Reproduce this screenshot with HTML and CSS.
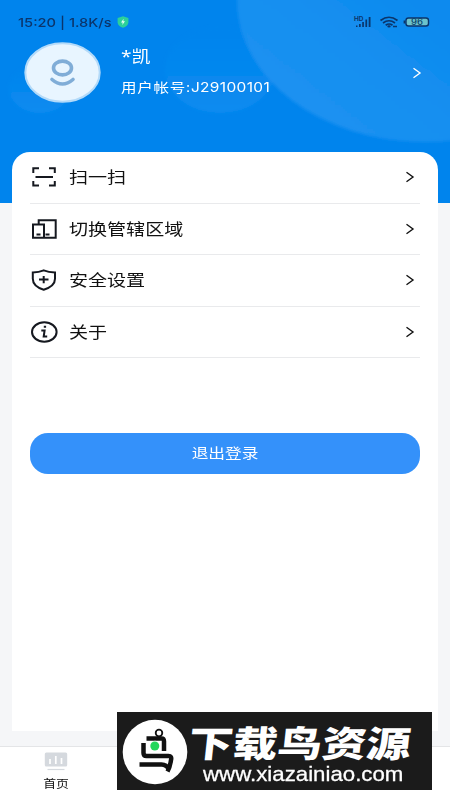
FILE: index.html
```html
<!DOCTYPE html>
<html lang="zh-CN">
<head>
<meta charset="utf-8">
<title>我的</title>
<link rel="stylesheet" href="styles.css">
</head>
<body>
<div class="app">
  <header class="hero">
    <svg class="hero-bg" viewBox="0 0 450 203">
      <defs>
        <linearGradient id="glow" gradientUnits="userSpaceOnUse" x1="300" y1="120" x2="400" y2="-10"><stop offset="0" stop-color="#1b91f1"/><stop offset=".5" stop-color="#178ff0"/><stop offset="1" stop-color="#0a8aee"/></linearGradient>
        <linearGradient id="soft" x1="0" y1="0" x2="0" y2="1"><stop offset=".1" stop-color="#0084ed"/><stop offset="1" stop-color="#0c8bf0"/></linearGradient>
        <filter id="feather"><feGaussianBlur stdDeviation="1.500"/></filter>
      </defs>
      <g filter="url(#feather)">
        <ellipse cx="40" cy="89" rx="31" ry="24" fill="url(#soft)"/>
        <ellipse cx="220" cy="70" rx="55" ry="43" fill="url(#soft)"/>
        <ellipse cx="425" cy="0" rx="188" ry="142" fill="url(#glow)"/>
      </g>
    </svg>
    <div class="status">
      <span class="clock">15:20 | 1.8K/s</span>
      <svg class="guard" width="12" height="12" viewBox="0 0 12 12"><path d="M6 .3 11.400 2v4.400c0 2.500-2.600 4.300-5.400 5.300C3.200 10.700.6 8.900.6 6.400V2z" fill="#2bd09a"/><path d="m6.600 2.800-2.600 3.600h1.700L5.300 9l2.700-3.700H6.300z" fill="#e8fff4"/></svg>
      <svg class="signals" width="78" height="16" viewBox="0 0 78 16">
        <text x="1" y="6.500" class="hd" textLength="9.500" lengthAdjust="spacingAndGlyphs">HD</text>
        <g fill="#0b356b"><rect x="3" y="11.500" width="1.500" height="1.500"/><rect x="6" y="10" width="1.700" height="3"/><rect x="9.200" y="8" width="1.700" height="5"/><rect x="12.400" y="5.500" width="1.700" height="7.500"/><rect x="15.700" y="3" width="1.800" height="10"/></g>
        <g fill="none" stroke="#0b356b" stroke-width="1.700"><path d="M27.500 6.500q8.500-6.500 17 0M30 9q6-4.500 12 0M32.700 11.300q3.400-2.600 6.800 0"/></g>
        <ellipse cx="36" cy="12.400" rx="1.700" ry="1.100" fill="#0b356b"/>
        <path d="M40 12.500h4" stroke="#0b356b" stroke-width="1.500"/>
        <rect x="53" y="4" width="22.500" height="8" rx="2.500" fill="#6cc3cc" stroke="#0b356b" stroke-width="1.400"/>
        <path d="M51.500 6.500v3" stroke="#0b356b" stroke-width="1.800"/>
        <text x="58" y="11" class="level" textLength="12" lengthAdjust="spacingAndGlyphs">96</text>
      </svg>
    </div>
    <div class="profile">
      <svg class="avatar" width="78" height="61" viewBox="0 0 78 61"><ellipse cx="38.500" cy="30.500" rx="37.200" ry="29.200" fill="#e8f5ff" stroke="#b3daf9" stroke-width="2"/><ellipse cx="38.500" cy="26" rx="9" ry="6.900" fill="none" stroke="#80add7" stroke-width="3.600"/><path d="M28 37.500q10.500 9 21 0" fill="none" stroke="#80add7" stroke-width="3.600" stroke-linecap="round"/></svg>
      <div class="who">
        <div class="name">*凯</div>
        <div class="account">用户帐号:<span class="id">J29100101</span></div>
      </div>
      <svg class="chevron light" width="10" height="12" viewBox="0 0 10 12"><path d="m1.500 1.200 6.500 4.800-6.500 4.800"/></svg>
    </div>
  </header>

  <main class="card">
    <div class="row">
      <svg class="icon" width="28" height="24" viewBox="0 0 28 24"><path d="M9 3.300H3.300V8M19 3.300h5.800V8M9 20.500H3.300V16M19 20.500h5.800V16M5.500 12h17.500"/></svg>
      <span class="label">扫一扫</span>
      <svg class="chevron" width="10" height="12" viewBox="0 0 10 12"><path d="m1.500 1.200 6.500 4.800-6.500 4.800"/></svg>
    </div>
    <div class="row">
      <svg class="icon" width="28" height="24" viewBox="0 0 28 24"><path d="M3 7.500h11v13.300H3zM8.700 7.500V3.300h17v17.500H14M6.500 17.500h4M15.500 17.500h4"/></svg>
      <span class="label">切换管辖区域</span>
      <svg class="chevron" width="10" height="12" viewBox="0 0 10 12"><path d="m1.500 1.200 6.500 4.800-6.500 4.800"/></svg>
    </div>
    <div class="row">
      <svg class="icon" width="28" height="24" viewBox="0 0 28 24"><path d="M13.700 2.300Q18.500 4.300 25 4.500v6.300c0 5.500-5 9-11.300 11C7.500 19.800 2.800 16.300 2.800 10.800V4.500Q9 4.300 13.700 2.300zM9 11.600h9.500M13.700 8v7.300"/></svg>
      <span class="label">安全设置</span>
      <svg class="chevron" width="10" height="12" viewBox="0 0 10 12"><path d="m1.500 1.200 6.500 4.800-6.500 4.800"/></svg>
    </div>
    <div class="row">
      <svg class="icon" width="28" height="24" viewBox="0 0 28 24"><ellipse cx="14.300" cy="12" rx="12.300" ry="9.700"/><path d="M11.300 10.500h3.300l-.9 6h3.500M13.800 6.700h2.300"/></svg>
      <span class="label">关于</span>
      <svg class="chevron" width="10" height="12" viewBox="0 0 10 12"><path d="m1.500 1.200 6.500 4.800-6.500 4.800"/></svg>
    </div>
    <button class="logout"><span>退出登录</span></button>
  </main>

  <nav class="tabs">
    <div class="tab">
      <svg width="24" height="20" viewBox="0 0 24 20"><rect x=".8" y=".5" width="22.400" height="14" rx="1.500" fill="#d5d9de"/><path d="M6 7v5M11.800 4v8M17.500 6v6" stroke="#fff" stroke-width="1.700"/><path d="M3.500 17.500h17" stroke="#d5d9de" stroke-width="1.200"/></svg>
      <span class="tab-label">首页</span>
    </div>
  </nav>

  <aside class="banner">
    <svg class="bird" width="66" height="66" viewBox="0 0 66 66">
      <circle cx="33" cy="33" r="32.300" fill="#fff"/>
      <circle cx="37" cy="14" r="3.300" fill="none" stroke="#111" stroke-width="1.800"/>
      <g fill="none" stroke="#111" stroke-width="4.500" stroke-linejoin="round"><path d="M24.500 19.500h15q2.500 0 2.500 3v9.500"/><path d="M21.500 24v10q0 3 3 3h22q3.500 0 2.500 4-1 7-3.500 11.500"/><path d="M17.500 45.500h22q5 0 7.500 5"/></g>
      <circle cx="33" cy="27" r="5.300" fill="#fff"/><circle cx="32.800" cy="27" r="4.500" fill="#22d65b"/>
    </svg>
    <div class="banner-text">
      <div class="site">下载鸟资源</div>
      <div class="url">www.xiazainiao.com</div>
    </div>
  </aside>
</div>
</body>
</html>
```
FILE: styles.css
```css
* { box-sizing: border-box; }
body { margin: 0; font-family: "Noto Sans", "Noto Sans CJK SC", sans-serif; }
.app {
  position: relative;
  width: 450px;
  height: 800px;
  overflow: hidden;
  display: flex;
  flex-direction: column;
  background: #f5f6f8;
}
.hero {
  position: relative;
  flex: none;
  height: 203px;
  background: #0084ed;
}
.hero-bg { position: absolute; inset: 0; width: 450px; height: 203px; }
.status {
  position: relative;
  display: flex;
  align-items: center;
  height: 42px;
  padding: 2px 19px 0 18px;
  color: #0b356b;
}
.clock {
  width: 99px;
  padding-top: 1px;
  font: 500 12px/16px Inter, sans-serif;
  white-space: nowrap;
  transform: scaleX(1.22);
  transform-origin: left;
}
.signals { margin-left: auto; }
.hd { font: 700 6px Inter, sans-serif; fill: #0b356b; }
.level { font: 500 8.5px Inter, sans-serif; fill: #0b456b; }
.profile {
  position: relative;
  display: flex;
  align-items: center;
  height: 61px;
  padding: 0 28px 0 24px;
}
.who { margin: -4px 0 0 19px; color: #fff; }
.name, .account {
  width: max-content;
  transform: scaleX(1.19);
  transform-origin: left;
  white-space: nowrap;
}
.name { font-size: 16px; line-height: 22px; margin-bottom: 11px; }
.account { font-size: 13px; line-height: 18px; letter-spacing: .65px; }
.id { font-family: Inter, sans-serif; font-size: 13px; letter-spacing: .3px; }
.chevron {
  margin-left: auto;
  fill: none;
  stroke: #111;
  stroke-width: 1.4;
}
.light { stroke: #fff; }
.card {
  position: relative;
  flex: none;
  height: 579px;
  margin: -51px 12px 0;
  padding: 0 18px;
  border-radius: 18px 18px 0 0;
  background: #fff;
}
.row {
  display: flex;
  align-items: center;
  height: 51.5px;
  padding-right: 5px;
  border-bottom: 1px solid #e9eaec;
}
.icon { fill: none; stroke: #15181f; stroke-width: 2; }
.label {
  margin-left: 11px;
  font-size: 16px;
  line-height: 24px;
  color: #111;
  transform: scaleX(1.19);
  transform-origin: left;
}
.logout {
  display: block;
  width: 100%;
  height: 41px;
  margin-top: 75px;
  padding: 0 0 3px;
  border: 0;
  border-radius: 18px;
  background: #3491fa;
  color: #fff;
  font: 14px/20px "Noto Sans CJK SC", sans-serif;
}
.logout span { display: inline-block; transform: scaleX(1.19); }
.tabs {
  flex: none;
  height: 54px;
  margin-top: 15px;
  display: flex;
  border-top: 1px solid #e4e5e7;
  background: #fff;
}
.tab {
  width: 112px;
  display: flex;
  flex-direction: column;
  align-items: center;
  padding-top: 5px;
}
.tab-label {
  margin-top: 4px;
  font-size: 11px;
  line-height: 16px;
  color: #111;
  transform: scaleX(1.17);
}
.banner {
  position: absolute;
  left: 117px;
  top: 712px;
  width: 315px;
  height: 78px;
  display: flex;
  align-items: center;
  padding: 2px 0 0 5px;
  background: #1b1b1b;
  color: #fff;
}
.bird { flex: none; }
.banner-text { padding-top: 4px; }
.site {
  width: max-content;
  margin-left: 1px;
  font: 900 36px/38px "Noto Sans CJK SC", sans-serif;
  transform: scaleX(1.235) skewX(-5deg);
  transform-origin: left;
}
.url {
  width: max-content;
  margin: 2px 0 0 15px;
  font: 21px/24px "Liberation Sans", sans-serif;
  transform: scaleX(1.06);
  transform-origin: left;
  -webkit-text-stroke: .3px #fff;
}
```
